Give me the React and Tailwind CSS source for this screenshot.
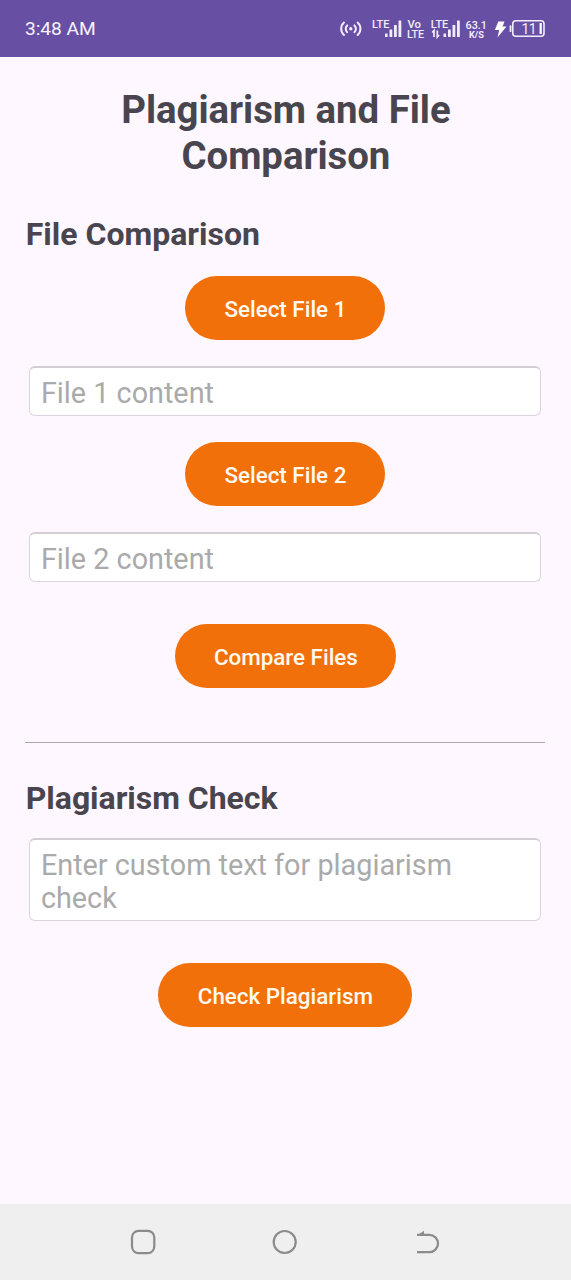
function Signal({ x }) {
  return (
    <g fill="#f2ecfb" stroke="none">
      <rect x={x} y="33.500" width="2.600" height="3.500" rx=".5" />
      <rect x={x + 4.5} y="29.500" width="2.800" height="7.500" rx=".5" />
      <rect x={x + 9} y="25" width="2.800" height="12" rx=".5" />
      <rect x={x + 13.5} y="20.500" width="2.800" height="16.500" rx=".5" />
    </g>
  );
}

function StatusIcons() {
  return (
    <svg width="211" height="57" viewBox="336 0 211 57" fill="none" stroke="#f2ecfb" fontFamily="Roboto, sans-serif">
      <g strokeWidth="2" strokeLinecap="round">
        <path d="M347.200 25.400a4.600 4.600 0 0 0 0 6.800M344 22.600a8.200 8.200 0 0 0 0 12.400M354.400 25.400a4.600 4.600 0 0 1 0 6.800M357.600 22.600a8.200 8.200 0 0 1 0 12.400" />
      </g>
      <circle cx="350.800" cy="28.800" r="1.700" fill="#f2ecfb" stroke="none" />
      <Signal x={385} />
      <Signal x={443.5} />
      <g fill="#f2ecfb" stroke="none" fontWeight="500">
        <text x="372" y="28.300" fontSize="11.500" textLength="17.500" lengthAdjust="spacingAndGlyphs">LTE</text>
        <text x="407.500" y="27.600" fontSize="10.500" textLength="13.500" lengthAdjust="spacingAndGlyphs">Vo</text>
        <text x="407" y="37.500" fontSize="10.500" textLength="17" lengthAdjust="spacingAndGlyphs">LTE</text>
        <text x="430.800" y="28.300" fontSize="11.500" textLength="17.500" lengthAdjust="spacingAndGlyphs">LTE</text>
        <text x="465.500" y="29" fontSize="11.500" textLength="21.500" lengthAdjust="spacingAndGlyphs">63.1</text>
        <text x="469" y="37.500" fontSize="8.800" fontWeight="700" textLength="15" lengthAdjust="spacingAndGlyphs">K/S</text>
        <text x="521.500" y="33.700" fontSize="14" fontWeight="400" textLength="15">11</text>
      </g>
      <path d="M434 37v-6.500l-1.800 2M437.300 30.500v6.500l1.800-2" strokeWidth="1.700" />
      <path d="M498.300 21.500h6.200l-1.800 5h3.800l-9 11 1.700-7.500h-4.400z" fill="#fff" stroke="none" />
      <rect x="512.800" y="20.700" width="31.200" height="15.600" rx="3" strokeWidth="1.600" />
      <path d="M510.500 26.200v5" strokeWidth="1.800" strokeLinecap="round" />
      <rect x="539.600" y="23" width="2.200" height="11" fill="#fff" stroke="none" />
    </svg>
  );
}

function PillButton({ className, children }) {
  return (
    <button className={`mx-auto flex h-16 shrink-0 items-center justify-center rounded-full bg-[#f2700a] pt-[3px] text-[22.4px] font-medium text-[#fffaf0] ${className}`}>
      {children}
    </button>
  );
}

function Field({ className, children }) {
  return (
    <div className={`mx-[4px] shrink-0 rounded-[6px] border border-t-2 border-[#dad5dc] border-t-[#d2ced4] bg-white px-[10.5px] pt-[9px] text-[28.8px] leading-[33px] text-[#aaaaaa] ${className}`}>
      {children}
    </div>
  );
}

export default function App() {
  return (
    <div className="flex h-[1280px] w-[571px] flex-col overflow-hidden bg-[#fef7ff] font-[Roboto,sans-serif]">
      <header className="flex h-[57px] shrink-0 items-center justify-between bg-[#6750a4] pr-6 pl-[25px] text-[19.2px] text-[#f7f2fd]">
        <span className="pt-px tracking-[-0.05px]">3:48 AM</span>
        <StatusIcons />
      </header>
      <main className="flex flex-1 flex-col pr-[25.6px] pl-[25.4px] pt-[30px] text-[#49454f]">
        <h1 className="pl-[1px] text-center text-[38.4px] leading-[45.500px] font-bold tracking-[-0.04px]">
          Plagiarism and File
          <br />
          Comparison
        </h1>
        <h2 className="mt-[37px] pl-[0.4px] text-[32px] leading-[38px] font-bold">File Comparison</h2>
        <PillButton className="mt-[23px] w-[200px]">Select File 1</PillButton>
        <Field className="mt-[26px] h-[50px]">File 1 content</Field>
        <PillButton className="mt-[26px] w-[200px]">Select File 2</PillButton>
        <Field className="mt-[26px] h-[50px]">File 2 content</Field>
        <PillButton className="mt-[42px] w-[221px] pl-[1px]">Compare Files</PillButton>
        <hr className="mt-[54px] shrink-0 border-t-[1.5px] border-[#aaa5ae]" />
        <h2 className="mt-[36px] pl-[0.4px] text-[32px] leading-[38px] font-bold tracking-[-0.04px]">Plagiarism Check</h2>
        <Field className="mt-[21px] h-[83px]">
          Enter custom text for plagiarism
          <br />
          check
        </Field>
        <PillButton className="mt-[42px] w-[254px]">Check Plagiarism</PillButton>
      </main>
      <nav className="flex h-[76px] shrink-0 items-center justify-between bg-[#efefef] pr-[129px] pl-[128.5px]">
        <svg width="28" height="28" viewBox="0 0 28 28" fill="none" stroke="#8b8b8b" strokeWidth="2.200">
          <rect x="3" y="2.900" width="22.300" height="22.200" rx="6.500" />
        </svg>
        <svg width="28" height="28" viewBox="0 0 28 28" fill="none" stroke="#8b8b8b" strokeWidth="2.200">
          <circle cx="13.700" cy="14" r="11" />
        </svg>
        <svg width="28" height="28" viewBox="0 0 28 28" fill="none" stroke="#8b8b8b" strokeWidth="2.200">
          <path d="M3 6.800h12.300a8.700 8.700 0 0 1 0 17.400H3" />
          <path d="M2.800 7.500 10 2.700v4.300z" fill="#8b8b8b" stroke="none" />
        </svg>
      </nav>
    </div>
  );
}
